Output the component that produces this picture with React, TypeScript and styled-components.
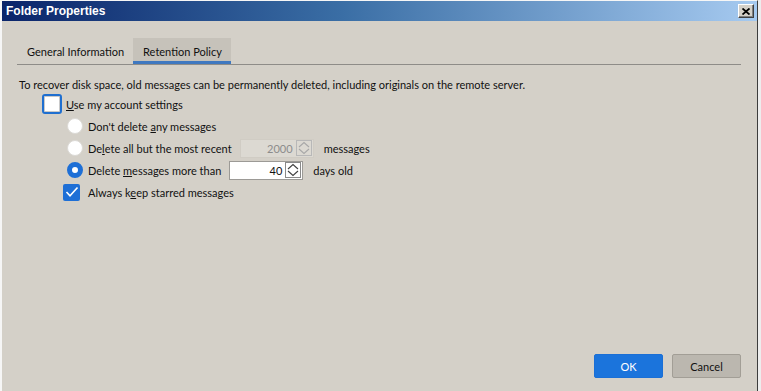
import { createGlobalStyle } from 'styled-components';
import styled from 'styled-components';

// Folder Properties dialog, "Retention Policy" tab.

const GlobalStyle = createGlobalStyle`
  html, body {
    margin: 0;
    padding: 0;
    background: #ededed;
  }
  body {
    font-family: Lato, "Liberation Sans", sans-serif;
    font-size: 11px;
    color: #111;
  }
`;

function SpinIcon({ disabled }: { disabled?: boolean }) {
  const c = disabled ? '#a8a8a8' : '#404040';
  return (
    <svg width="16" height="16" viewBox="0 0 16 16">
      <rect x="0.5" y="0.5" width="15" height="15" fill="none" stroke={disabled ? '#b8b8b8' : '#8a8a8a'} />
      <polyline points="3,7 8,2.5 13,7" fill="none" stroke={c} strokeWidth="1.1" />
      <polyline points="3,9 8,13.5 13,9" fill="none" stroke={c} strokeWidth="1.1" />
    </svg>
  );
}

export default function App() {
  return (
    <>
      <GlobalStyle />
      <Window>
        <TitleBar>
          <Title>Folder Properties</Title>
          <CloseButton type="button">
            <svg width="8" height="7" viewBox="0 0 8 7">
              <path d="M0.5 0.5 L7.5 6.5 M7.5 0.5 L0.5 6.5" stroke="#000" strokeWidth="1.8" />
            </svg>
          </CloseButton>
        </TitleBar>

        <Body>
          <TabList>
            <Tab>General Information</Tab>
            <Tab $active>Retention Policy</Tab>
          </TabList>

          <Panel>
            <Description>
              To recover disk space, old messages can be permanently deleted, including originals on the remote server.
            </Description>

            <Row $indent={25} $gap={4}>
              <FocusCheck />
              <Label><u>U</u>se my account settings</Label>
            </Row>

            <Row $indent={50}>
              <Radio />
              <Label>Don't delete <u>a</u>ny messages</Label>
            </Row>

            <Row $indent={50}>
              <Radio />
              <Label>De<u>l</u>ete all but the most recent</Label>
              <SpinBox $disabled>
                <SpinValue $disabled>2000</SpinValue>
                <SpinIcon disabled />
              </SpinBox>
              <Label>messages</Label>
            </Row>

            <Row $indent={50}>
              <Radio $checked />
              <Label>Delete <u>m</u>essages more than</Label>
              <SpinBox>
                <SpinValue>40</SpinValue>
                <SpinIcon />
              </SpinBox>
              <Label>days old</Label>
            </Row>

            <Row $indent={46} $gap={8}>
              <CheckedBox>
                <svg width="14" height="12" viewBox="0 0 14 12">
                  <polyline points="1.5,6 5,9.8 12.5,1.5" fill="none" stroke="#fff" strokeWidth="1.6" />
                </svg>
              </CheckedBox>
              <Label>Always k<u>e</u>ep starred messages</Label>
            </Row>
          </Panel>

          <Footer>
            <DialogButton $primary type="button">OK</DialogButton>
            <DialogButton type="button">Cancel</DialogButton>
          </Footer>
        </Body>
      </Window>
    </>
  );
}

// ─── Styled Components ───────────────────────────────────────────

const Window = styled.div`
  box-sizing: border-box;
  width: 758px;
  height: 391px;
  display: flex;
  flex-direction: column;
  background: #d4d0c8;
  border-left: 2px solid #f6f6f6;
  border-right: 1px solid #3c3c3c;
  border-top: 1px solid #f6f6f6;
`;

const TitleBar = styled.div`
  height: 20px;
  display: flex;
  align-items: center;
  justify-content: space-between;
  padding: 0 3px 0 4px;
  background: linear-gradient(to right, #0a246a 0%, #3a6ea5 45%, #a6caf0 100%);
`;

const Title = styled.span`
  font-family: "Liberation Sans", Arial, sans-serif;
  font-weight: 700;
  font-size: 12px;
  color: #ffffff;
`;

const CloseButton = styled.button`
  box-sizing: border-box;
  width: 16px;
  height: 14px;
  padding: 0;
  display: flex;
  align-items: center;
  justify-content: center;
  background: #d4d0c8;
  border: 1px solid;
  border-color: #ffffff #404040 #404040 #ffffff;
  box-shadow: inset -1px -1px 0 #808080;
`;

const Body = styled.div`
  flex: 1;
  display: flex;
  flex-direction: column;
  padding: 17px 16px 13px 15px;
`;

const TabList = styled.div`
  display: flex;
  border-bottom: 1px solid #8e8c88;
`;

const Tab = styled.div<{ $active?: boolean }>`
  box-sizing: border-box;
  height: 26px;
  padding: 3px 9px 0 10px;
  display: flex;
  align-items: center;
  font-size: 11px;
  background: ${(p) => (p.$active ? '#c6c2ba' : 'transparent')};
  border-bottom: 3px solid ${(p) => (p.$active ? '#3f78c0' : 'transparent')};
`;

const Panel = styled.div`
  display: flex;
  flex-direction: column;
  padding-top: 12px;
`;

const Description = styled.div`
  line-height: 16px;
  height: 16px;
  padding-left: 2px;
`;

const Row = styled.div<{ $indent: number; $gap?: number }>`
  height: 22px;
  display: flex;
  align-items: center;
  gap: ${(p) => p.$gap ?? 5}px;
  padding-left: ${(p) => p.$indent}px;
`;

const Label = styled.span`
  white-space: nowrap;
  margin-right: 3px;
`;

const FocusCheck = styled.span`
  box-sizing: border-box;
  width: 20px;
  height: 20px;
  border: 2px solid #1f6fd0;
  border-radius: 3px;
  background: #ffffff;
  box-shadow: inset 0 0 0 1px #c9c9c9;
`;

const Radio = styled.span<{ $checked?: boolean }>`
  box-sizing: border-box;
  width: 16px;
  height: 16px;
  border-radius: 50%;
  background: #ffffff;
  border: ${(p) => (p.$checked ? '5px solid #1e6fd6' : '1px solid #dcdad6')};
`;

const CheckedBox = styled.span`
  box-sizing: border-box;
  width: 17px;
  height: 17px;
  border-radius: 2px;
  background: #1e6fd6;
  display: flex;
  align-items: center;
  justify-content: center;
`;

const SpinBox = styled.div<{ $disabled?: boolean }>`
  box-sizing: border-box;
  width: 74px;
  height: 19px;
  display: flex;
  align-items: center;
  gap: 3px;
  padding: 0 1px 0 4px;
  margin-right: 5px;
  background: ${(p) => (p.$disabled ? '#dcd9d2' : '#ffffff')};
  border: 1px solid ${(p) => (p.$disabled ? '#d0ccc4' : '#9c9a96')};
`;

const SpinValue = styled.span<{ $disabled?: boolean }>`
  flex: 1;
  text-align: right;
  color: ${(p) => (p.$disabled ? '#8c8c8c' : '#111')};
`;

const Footer = styled.div`
  margin-top: auto;
  display: flex;
  justify-content: flex-end;
  gap: 9px;
`;

const DialogButton = styled.button<{ $primary?: boolean }>`
  box-sizing: border-box;
  width: 69px;
  height: 24px;
  border-radius: 2px;
  font-family: Lato, "Liberation Sans", sans-serif;
  font-size: 11px;
  border: 1px solid ${(p) => (p.$primary ? '#1a6fd6' : '#a29e96')};
  background: ${(p) => (p.$primary ? '#1b74dc' : '#bbb7af')};
  color: ${(p) => (p.$primary ? '#ffffff' : '#111')};
`;
